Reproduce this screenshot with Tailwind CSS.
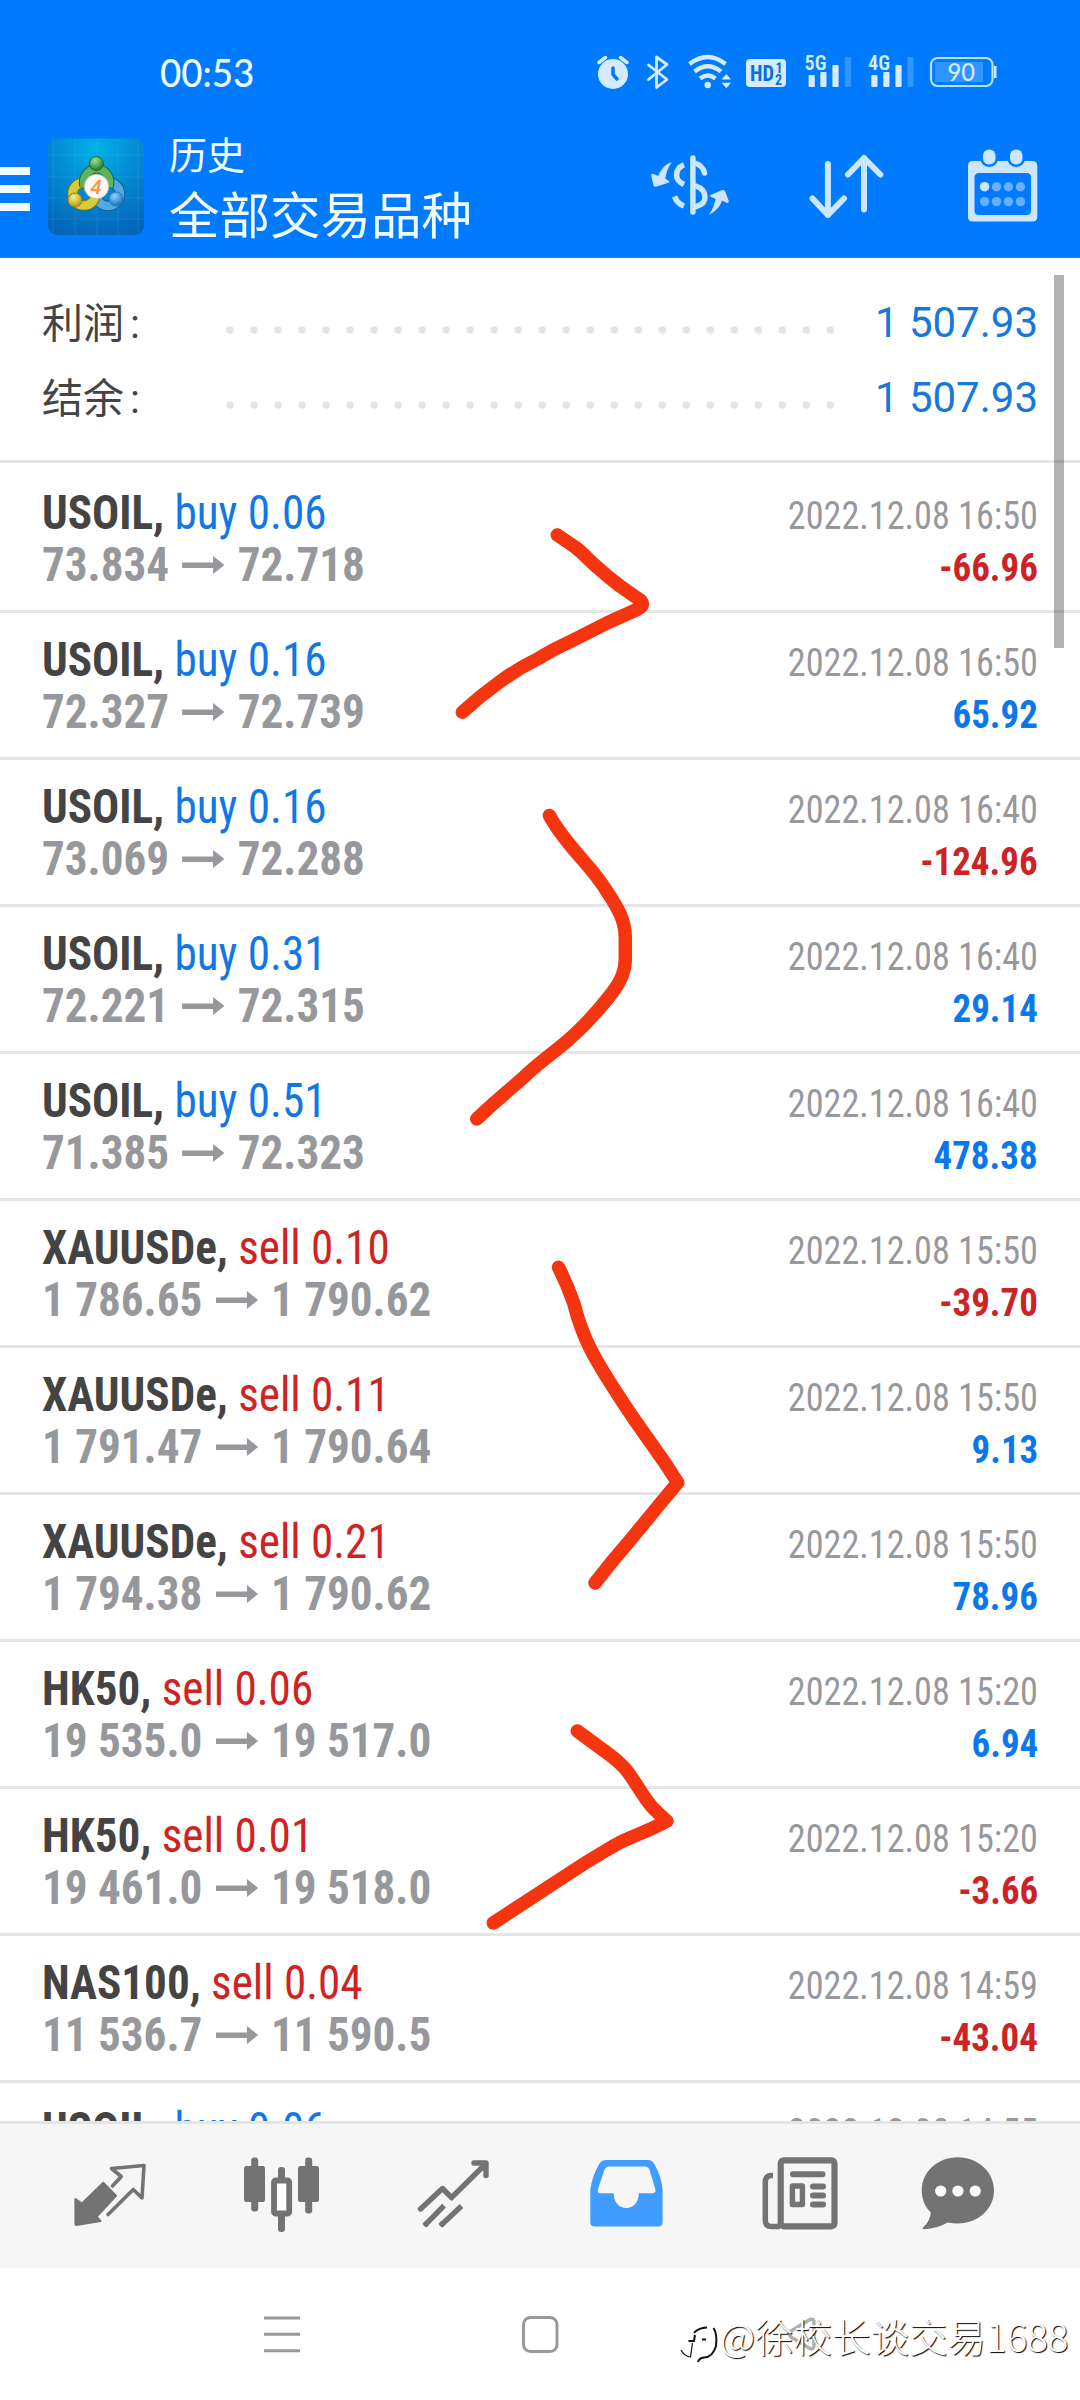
<!DOCTYPE html>
<html lang="zh-CN">
<head>
<meta charset="utf-8">
<title>历史</title>
<script src="https://cdn.jsdelivr.net/npm/@tailwindcss/browser@4"></script>
</head>
<body class="bg-white">
<div class="relative flex h-[2400px] w-[1080px] flex-col overflow-hidden bg-white font-[Roboto,'Noto_Sans_CJK_SC',sans-serif]">

  <header class="h-[258px] shrink-0 border-b border-[#3f7fc8] bg-[#007aff] text-white">
    <!-- status bar -->
    <div class="flex h-[138px] pt-[50px]">
      <div class="-mt-px ml-[160px] w-[430px] origin-left scale-x-94 font-[Lato,sans-serif] text-[39px] leading-[46px] font-medium text-[#f0faff]">00:53</div>
      <svg class="h-[46px] w-[420px] shrink-0" viewBox="590 50 420 46" fill="none" stroke-linecap="round" stroke-linejoin="round">
        <g stroke="#d6ebff" fill="#d6ebff">
          <circle cx="613" cy="74" r="15" stroke="none"/>
          <path d="M599 62.500L605.500 57.500M620.500 57.500L627 62.500" stroke-width="3.500"/>
          <path d="M613 68V74.500L617 79" stroke="#007aff" stroke-width="3.500" fill="none"/>
          <path d="M648.500 65L667 79.500L656.500 87.500V57L667 64.500L648.500 79.500" fill="none" stroke-width="2.800"/>
          <path d="M689.500 64Q707.700 50 725.500 64M694.500 71.500Q707.700 61 721 71.500M700 78.500Q707.700 72.500 715.500 78.500" fill="none" stroke-width="4.200" stroke-linecap="butt"/>
          <circle cx="707.700" cy="85" r="3.200" stroke="none"/>
          <path d="M721.500 79.500L726.300 74L731 79.500ZM721.500 82.800L726.300 88.300L731 82.800Z" stroke="none"/>
          <rect x="746" y="59" width="40" height="28" rx="4" stroke="none"/>
        </g>
        <g fill="#d6ebff">
          <rect x="808.600" y="75" width="6.200" height="12" rx="1"/><rect x="820.300" y="72" width="6.200" height="15" rx="1"/><rect x="832.400" y="65" width="6.200" height="22" rx="1"/>
          <rect x="871.300" y="75" width="6.200" height="12" rx="1"/><rect x="883.300" y="72" width="6.200" height="15" rx="1"/><rect x="895.400" y="65" width="6.200" height="22" rx="1"/>
          <path d="M994 66h2.500v12h-2.500z"/>
        </g>
        <g fill="#2f95ff"><rect x="844.800" y="57" width="6.200" height="30" rx="1"/><rect x="907.400" y="57" width="6.200" height="30" rx="1"/><rect x="935" y="62" width="48" height="20"/></g>
        <rect x="931" y="58" width="61.500" height="28" rx="6.500" stroke="#b5e2ff" stroke-width="2.200"/>
        <g font-family="'Roboto Condensed'" font-weight="700">
          <text x="750" y="81" font-size="22" textLength="24" lengthAdjust="spacingAndGlyphs" fill="#0a6fe0">HD</text>
          <text x="775.500" y="72.500" font-size="14" fill="#0a6fe0">1</text>
          <text x="775" y="84.500" font-size="14" fill="#0a6fe0">2</text>
          <text x="804.500" y="70" font-size="21" font-weight="600" textLength="22" lengthAdjust="spacingAndGlyphs" fill="#d6ebff">5G</text>
          <text x="868" y="70" font-size="21" font-weight="600" textLength="22" lengthAdjust="spacingAndGlyphs" fill="#d6ebff">4G</text>
        </g>
        <text x="947.500" y="81" font-size="24" textLength="27.500" lengthAdjust="spacingAndGlyphs" font-family="Lato" font-weight="500" fill="#d6ebff">90</text>
      </svg>
    </div>
    <!-- toolbar -->
    <div class="flex h-[119px]">
      <div class="mt-[29px] flex w-[30px] shrink-0 flex-col gap-[10px]">
        <i class="h-2 bg-[#f0faff]"></i><i class="h-2 bg-[#f0faff]"></i><i class="h-2 bg-[#f0faff]"></i>
      </div>
      <svg class="ml-[18px] h-[97px] w-[96px] shrink-0" viewBox="48 138 96 97">
        <defs>
          <radialGradient id="bg" cx=".5" cy=".1" r="1"><stop offset="0" stop-color="#02b3e6"/><stop offset=".45" stop-color="#0389d2"/><stop offset="1" stop-color="#0560b4"/></radialGradient>
          <radialGradient id="g" cx=".4" cy=".3" r=".7"><stop offset="0" stop-color="#a6e08a"/><stop offset="1" stop-color="#1f7d2c"/></radialGradient>
          <radialGradient id="y" cx=".4" cy=".3" r=".7"><stop offset="0" stop-color="#fbf08a"/><stop offset="1" stop-color="#b59a14"/></radialGradient>
          <radialGradient id="b" cx=".4" cy=".3" r=".7"><stop offset="0" stop-color="#8fd6fa"/><stop offset="1" stop-color="#1273c0"/></radialGradient>
        </defs>
        <rect x="48" y="138.500" width="96" height="96.500" rx="9" fill="url(#bg)"/>
        <path d="M53 138V235M75 138V235M97 138V235M118 138V235M138 138V235M48 155H144M48 177H144M48 198H144M48 219H144" stroke="#5cc4f2" stroke-opacity=".18" stroke-width="1"/>
        <circle cx="108" cy="194" r="12" fill="none" stroke="#155a96" stroke-width="10.500"/>
        <circle cx="108" cy="194" r="12" fill="none" stroke="#4fa9e2" stroke-width="8.500"/>
        <circle cx="84" cy="194" r="11.500" fill="none" stroke="#7a7418" stroke-width="10.500"/>
        <circle cx="84" cy="194" r="11.500" fill="none" stroke="#d8cb3a" stroke-width="8.500"/>
        <path d="M84 186A13 14 0 1 1 109 187" fill="none" stroke="#1d6a35" stroke-width="9.500"/>
        <path d="M84 186A13 14 0 1 1 109 187" fill="none" stroke="#5cb55a" stroke-width="7.500"/>
        <circle cx="96.400" cy="163.500" r="7" fill="url(#g)" stroke="#1d6a35"/>
        <circle cx="75" cy="200" r="7" fill="url(#y)" stroke="#8c8118"/>
        <circle cx="116" cy="199" r="7" fill="url(#b)" stroke="#2b7ab8"/>
        <circle cx="96.500" cy="186.500" r="12.300" fill="#fdf6f2" stroke="#b9b8a0"/>
        <text x="96" y="193.500" text-anchor="middle" font-family="Roboto" font-weight="600" font-style="italic" font-size="20" fill="#f29a4a">4</text>
      </svg>
      <div class="ml-[25px] w-[471px] shrink-0 font-['Noto_Sans_CJK_SC',sans-serif] text-[#f0faff]">
        <div class="-mt-[6px] text-[38px] leading-[42px]">历史</div>
        <div class="mt-[8px] text-[50.500px] leading-[60px]">全部交易品种</div>
      </div>
      <svg class="mt-[2px] h-[90px] w-[400px] shrink-0" viewBox="640 140 400 90" fill="none" stroke="#cde6ff" stroke-width="5.500" stroke-linecap="round" stroke-linejoin="round">
        <g>
          <path d="M692.900 158V212"/>
          <path d="M696 163.500Q703 166 704.500 173M696 186Q705 189 705 197.500Q705 204 696 206.500"/>
          <path d="M684 164.800Q676.500 168 676.500 175Q676.500 181 684 184.500M674.500 196.500Q677 203.500 684 206" stroke-linecap="butt"/>
          <g fill="#cde6ff" stroke="none">
            <path d="M671.700 162.300C665 164 660.500 170 658.300 176L653 173.800Q651 173.500 651.200 175.500L653.500 185.500Q654 187 656 186.700L668.500 182.800Q670 182 668.800 180.800L665.300 178.700C666 173 668 167.500 671.700 162.300Z"/>
            <path d="M708.700 215C716 211.500 720.500 206 722 200.500L727 203Q729 203 728.800 201L725 191Q724 189.500 722 190L710.500 195Q709.500 196 711 197L715.500 198.800C714.500 205 712.500 210 708.700 215Z"/>
          </g>
        </g>
        <path d="M827.900 164V215M812.500 198.500L827.900 215L844 198.500M864 209.500V158M848 174.500L864 158L880.300 174.500" stroke-width="6"/>
        <g stroke="none">
          <path fill="#cde6ff" fill-rule="evenodd" d="M973 161H1032Q1037.300 161 1037.300 166V217Q1037.300 221.600 1032 221.600H973Q968 221.600 968 217V166Q968 161 973 161ZM979 173Q974.500 173 974.500 177.500V210.500Q974.500 215 979 215H1026.500Q1031 215 1031 210.500V177.500Q1031 173 1026.500 173Z"/>
          <rect x="983" y="149.500" width="12.500" height="15" rx="6" fill="#cde6ff" stroke="#007aff" stroke-width="5" paint-order="stroke"/>
          <rect x="1010" y="149.500" width="12.500" height="15" rx="6" fill="#cde6ff" stroke="#007aff" stroke-width="5" paint-order="stroke"/>
          <circle cx="984.600" cy="186.700" r="4.800" fill="#cde6ff"/>
          <g fill="#66b0ff"><circle cx="996.500" cy="186.700" r="4.700"/><circle cx="1008.400" cy="186.700" r="4.700"/><circle cx="1020.400" cy="186.700" r="4.700"/><circle cx="984.600" cy="201.600" r="4.700"/><circle cx="996.500" cy="201.600" r="4.700"/><circle cx="1008.400" cy="201.600" r="4.700"/><circle cx="1020.400" cy="201.600" r="4.700"/></g>
        </g>
      </svg>
    </div>
  </header>

  <main class="h-[1863px] shrink-0 overflow-hidden">
    <section class="flex h-[202px] flex-col pt-[27px] pr-[42px] pl-[42px]">
      <div class="flex h-[75px] items-center">
        <div class="w-[180px] font-['Noto_Sans_CJK_SC',sans-serif] text-[41px] text-[#444]">利润<span class="ml-[6px] font-[Roboto]">:</span></div>
        <svg class="mt-[15px] h-2 w-[616px]" viewBox="0 0 616 8"><path d="M8 4H609" stroke="#e4e4e4" stroke-width="7.500" stroke-linecap="round" stroke-dasharray="0 24.010"/></svg>
        <div class="ml-auto text-[42px] text-[#1877db]">1 507.93</div>
      </div>
      <div class="flex h-[75px] items-center">
        <div class="w-[180px] font-['Noto_Sans_CJK_SC',sans-serif] text-[41px] text-[#444]">结余<span class="ml-[6px] font-[Roboto]">:</span></div>
        <svg class="mt-[15px] h-2 w-[616px]" viewBox="0 0 616 8"><path d="M8 4H609" stroke="#e4e4e4" stroke-width="7.500" stroke-linecap="round" stroke-dasharray="0 24.010"/></svg>
        <div class="ml-auto text-[42px] text-[#1877db]">1 507.93</div>
      </div>
    </section>
    <ul id="deals" class="font-['Roboto_Condensed',Roboto,sans-serif]"></ul>
  </main>

  <nav class="h-[147px] shrink-0 border-t-[3px] border-[#e5e5e5] bg-[#f6f6f6]">
    <svg class="h-[144px] w-[1080px]" viewBox="0 2124 1080 144" fill="none" stroke="#737373" stroke-linecap="round" stroke-linejoin="round">
      <path fill="#737373" stroke-width="2" d="M75.400 2199L82 2203.500L103.300 2182.700L116 2195.700L96.500 2216.700L100.500 2221L76.500 2225Q75.400 2225 75.400 2224Z"/>
      <path stroke-width="3.600" d="M112.500 2186L121.300 2176.500L111.500 2168.500L144 2165.500L142 2198L133.300 2189.500L108 2214.500"/>
      <g fill="#737373" stroke="none">
        <rect x="244" y="2166" width="21" height="36" rx="2.500"/><rect x="298" y="2166" width="21" height="36" rx="2.500"/>
        <rect x="251.200" y="2157.500" width="7" height="54" rx="3"/><rect x="305.200" y="2157.500" width="7" height="56" rx="3"/>
        <rect x="278" y="2167" width="7" height="15" rx="3"/><rect x="278" y="2212" width="7" height="20" rx="3"/>
      </g>
      <rect x="274" y="2180.500" width="15.200" height="33" rx="1.500" stroke-width="5.800" fill="#fff"/>
      <path stroke-width="5.400" d="M420.500 2209L442.500 2188.500L451.500 2197.700L486 2163.500M474 2163H486V2175.500"/>
      <path stroke-width="5.400" stroke-linecap="butt" d="M424.500 2225.700L444 2205.700M440.500 2225.700L461.500 2206"/>
      <circle cx="426" cy="2224" r="2.700" fill="#737373" stroke="none"/><circle cx="442" cy="2224" r="2.700" fill="#737373" stroke="none"/>
      <path fill="#409cff" fill-rule="evenodd" stroke="none" d="M606 2160H648Q652 2160 654 2163.500Q661.500 2176 662.600 2190V2222Q662.600 2226.500 658 2226.500H595Q590.300 2226.500 590.300 2222V2190Q592 2176 599.500 2163.500Q601.500 2160 606 2160ZM609 2166.500Q606 2166.500 604.500 2169.500L598 2189Q597 2193.300 600.500 2193.300H613.700C613.700 2213 638.800 2213 638.800 2193.300H652Q656.500 2193.300 655.300 2189L649.500 2169.500Q648 2166.500 645 2166.500Z"/>
      <rect x="780.700" y="2160.300" width="53.800" height="66" rx="3" stroke-width="6.200"/>
      <path stroke-width="5.500" stroke-linecap="butt" d="M773 2175.500H771Q765.300 2176 765.300 2182V2220Q765.300 2226.500 771.500 2226.500H780"/>
      <path stroke-width="6" d="M793 2174.300H822.500M813 2186.500H823M813 2195.500H823M813 2204.500H823"/>
      <rect x="792.400" y="2186" width="10" height="18.500" stroke-width="5.400"/>
      <path fill="#737373" stroke="none" d="M957.700 2157.300C978 2157.300 994 2172 994 2190.500S978 2223.500 957.700 2223.500Q952.500 2223.500 947.500 2222.500Q938 2228.500 924 2229.300Q921.500 2229 923.500 2227Q930.500 2220.500 930.700 2212.500Q921.700 2203.500 921.700 2190.500C921.700 2172 937.500 2157.300 957.700 2157.300Z"/>
      <g fill="#fff" stroke="none"><circle cx="940.700" cy="2191" r="5.600"/><circle cx="957.900" cy="2191" r="5.600"/><circle cx="975.200" cy="2191" r="5.600"/></g>
    </svg>
  </nav>

  <footer class="h-[132px] shrink-0">
    <svg class="h-[132px] w-[1080px]" viewBox="0 2268 1080 132" fill="none" stroke="#999" stroke-width="3" stroke-linejoin="round">
      <path d="M264 2318H300M264 2334.300H300M264 2350.700H300"/>
      <rect x="523.500" y="2317.500" width="33.500" height="34" rx="7"/>
      <path stroke="#b0b0b0" stroke-width="3.500" d="M810 2319.500L791 2331Q788 2334 791 2337L810 2348.500Q814 2350 814 2345V2323Q814 2318 810 2319.500Z"/>
    </svg>
  </footer>

  <!-- scroll thumb -->
  <div class="absolute top-[275px] left-[1054px] h-[373px] w-[10px] bg-black/30"></div>

  <!-- hand-drawn marks -->
  <svg class="absolute top-0 left-0 h-[2400px] w-[1080px]" viewBox="0 0 1080 2400" fill="none" stroke="#f5350f" stroke-width="13.500" stroke-linecap="round" stroke-linejoin="round">
    <path d="M557.300 535L575 547C583 553 590 561 597 567Q608 577 620 586L637 598Q648 604 637 609.500L607 623L570 641.700Q552 650 537 659.300Q517 669 500 681.700Q480 696 462.300 712.300"/>
    <path d="M549.400 815.500C566 846 590 864 606 890C618 908 625.300 920 625.300 938V960Q625.300 976 612 993Q592 1019 570.600 1038C555 1052 538 1063 524 1077Q508 1091 494 1103L476.700 1119"/>
    <path d="M558.500 1267.300Q567 1284 573.700 1303C578 1320 582 1332 590 1348C602 1372 618 1395 634 1419L665 1463L677.700 1482.700L660.700 1503L629.500 1541Q612 1561 595 1583"/>
    <path d="M577.300 1731L610 1755Q618 1761 625 1768.300C634 1779 643 1797 653 1808Q660 1815 667 1821Q652 1829 636.700 1835Q621 1841 606.700 1850Q586 1862 566.700 1875L493.300 1923"/>
  </svg>

  <!-- watermark -->
  <svg class="absolute top-[2318px] left-[676px] h-[50px] w-[46px]" viewBox="676 2318 46 50" fill="none" stroke="#111" stroke-width="2">
    <path d="M694 2333Q698 2328 707 2327.500M688.500 2341H694L695 2335M702 2339.500H706M713.500 2328Q717.500 2334 716 2346Q713 2357 704 2357.500Q699 2358 698 2362"/>
    <path stroke-width="1.200" d="M681 2350Q684 2356 690.500 2357L692.500 2343"/>
  </svg>
  <div class="absolute top-[2305px] left-[720px] font-['Noto_Sans_CJK_SC',sans-serif] text-[38.500px] leading-[60px] font-light whitespace-nowrap text-white [text-shadow:1px_1px_1px_#000]">@徐校长谈交易1688</div>
</div>

<script>
const deals = [
  ['USOIL','buy','0.06','73.834','72.718','2022.12.08 16:50','-66.96'],
  ['USOIL','buy','0.16','72.327','72.739','2022.12.08 16:50','65.92'],
  ['USOIL','buy','0.16','73.069','72.288','2022.12.08 16:40','-124.96'],
  ['USOIL','buy','0.31','72.221','72.315','2022.12.08 16:40','29.14'],
  ['USOIL','buy','0.51','71.385','72.323','2022.12.08 16:40','478.38'],
  ['XAUUSDe','sell','0.10','1 786.65','1 790.62','2022.12.08 15:50','-39.70'],
  ['XAUUSDe','sell','0.11','1 791.47','1 790.64','2022.12.08 15:50','9.13'],
  ['XAUUSDe','sell','0.21','1 794.38','1 790.62','2022.12.08 15:50','78.96'],
  ['HK50','sell','0.06','19 535.0','19 517.0','2022.12.08 15:20','6.94'],
  ['HK50','sell','0.01','19 461.0','19 518.0','2022.12.08 15:20','-3.66'],
  ['NAS100','sell','0.04','11 536.7','11 590.5','2022.12.08 14:59','-43.04'],
  ['USOIL','buy','0.06','73.834','72.718','2022.12.08 14:55','']
];
document.getElementById('deals').innerHTML = deals.map(([s,side,vol,from,to,time,pl]) => `
  <li class="h-[147px] border-t-[3px] border-[#e5e5e5] px-[42px] pt-[21px] first:h-[150px] first:pt-[24px]">
    <div class="flex h-[52px] items-baseline justify-between leading-[52px]">
      <div class="origin-left scale-x-94 text-[48px] whitespace-nowrap"><b class="font-bold text-[#444]">${s},</b> <span class="${side === 'buy' ? 'text-[#1277e6]' : 'text-[#cf2323]'}">${side} ${vol}</span></div>
      <div class="origin-right scale-x-93 text-[38.900px] text-[#97989c]">${time}</div>
    </div>
    <div class="flex h-[52px] items-baseline justify-between leading-[52px] font-bold">
      <div class="flex origin-left scale-x-94 items-baseline gap-[14px] text-[48px] whitespace-nowrap text-[#97989c]">${from}<svg class="h-[25px] w-[45px]" viewBox="0 0 45 25"><path d="M0 6.500H33V0L45 9L33 18V12H0Z" fill="#97989c"/></svg>${to}</div>
      <div class="origin-right scale-x-95 text-[38.900px] ${pl[0] === '-' ? 'text-[#cc2326]' : 'text-[#0a78ec]'}">${pl}</div>
    </div>
  </li>`).join('');
</script>
</body>
</html>
